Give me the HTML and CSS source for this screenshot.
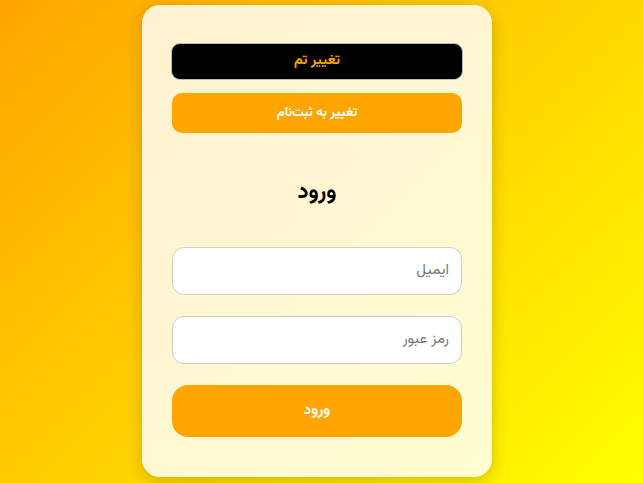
FILE: index.html
```html
<!DOCTYPE html>
<html lang="fa" dir="rtl">
<head>
<meta charset="utf-8">
<title>ورود</title>
<link rel="stylesheet" href="styles.css">
</head>
<body>
<div class="card">
  <button class="theme-btn">تغییر تم</button>
  <button class="switch-btn">تغییر به ثبت‌نام</button>
  <h2 class="title">ورود</h2>
  <input class="field" type="email" placeholder="ایمیل">
  <input class="field" type="password" placeholder="رمز عبور">
  <button class="submit-btn">ورود</button>
</div>
</body>
</html>
```
FILE: styles.css
```css
html, body { height: 100%; }
body {
  margin: 0;
  font-family: "Vazirmatn", "Noto Sans Arabic", "Noto Naskh Arabic", "Noto Sans Arabic UI", sans-serif;
  background: linear-gradient(135deg, #ffa500, #ffff00);
  display: flex;
  align-items: center;
  justify-content: center;
}
.card {
  width: 350px;
  margin: 0 9px 2px 0;
  box-sizing: border-box;
  padding: 38px 30px 40px;
  background: rgba(255, 255, 255, 0.82);
  border-radius: 18px;
  box-shadow: 0 4px 16px rgba(0, 0, 0, 0.2);
  display: flex;
  flex-direction: column;
}
button { font-family: inherit; cursor: pointer; }
.theme-btn {
  height: 37px;
  margin: 0 -1px;
  background: #000;
  color: #ffa500;
  border: 1px solid #bbb;
  border-radius: 9px;
  font-weight: bold;
  font-size: 14px;
}
.switch-btn {
  margin-top: 13px;
  height: 40px;
  background: #ffa500;
  color: #fff;
  border: none;
  border-radius: 10px;
  font-weight: bold;
  font-size: 13px;
}
.title {
  margin: 42px 0 0;
  height: 72px;
  text-align: center;
  font-size: 22px;
  font-weight: bold;
  color: #000;
}
.field {
  height: 48px;
  box-sizing: border-box;
  border: 1px solid #ccc;
  border-radius: 12px;
  padding: 0 12px;
  font-family: inherit;
  font-size: 15px;
  background: #fff;
  direction: rtl;
  margin-bottom: 21px;
}
.field::placeholder { color: #777; }
.submit-btn {
  height: 52px;
  background: #ffa500;
  color: #fff;
  border: none;
  border-radius: 16px;
  font-weight: bold;
  font-size: 15px;
}
```
